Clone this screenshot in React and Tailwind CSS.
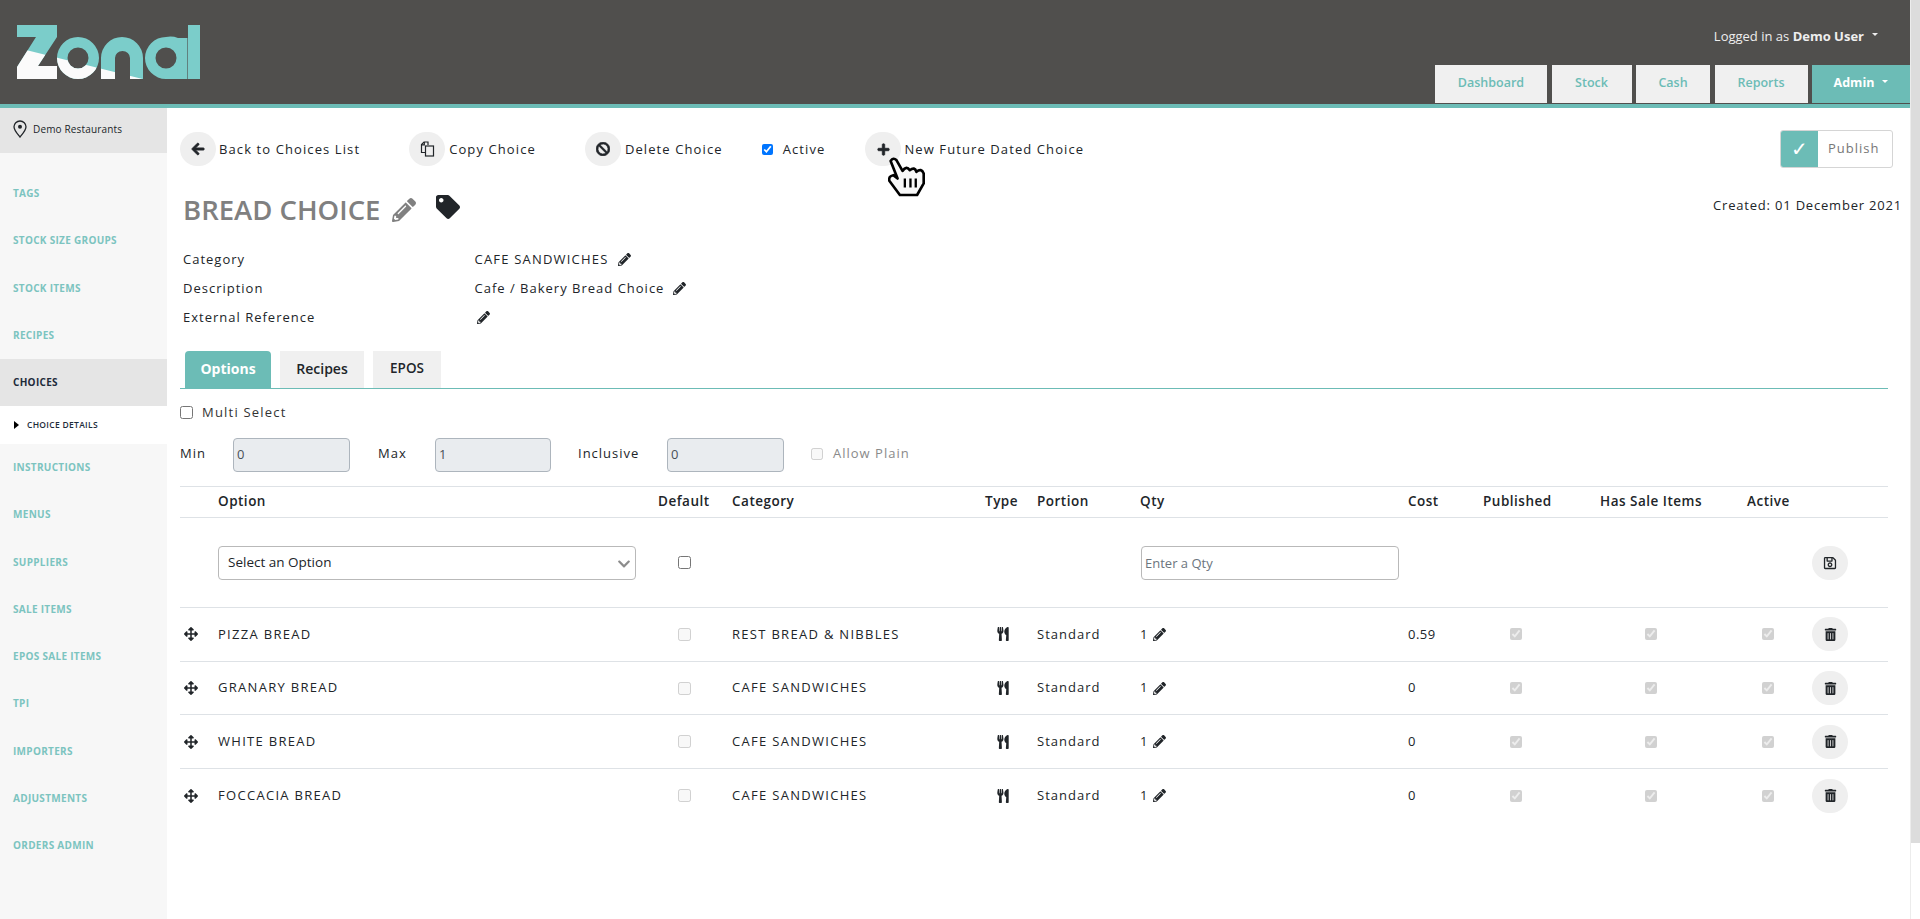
import React from 'react';
import {
  FaArrowLeft,
  FaArrowsAlt,
  FaBan,
  FaChevronDown,
  FaPencilAlt,
  FaPlus,
  FaRegSave,
  FaTag,
  FaTrashAlt,
  FaUtensils,
} from 'react-icons/fa';

const navTop = ['Tags', 'Stock Size Groups', 'Stock Items', 'Recipes'];
const navBottom = ['Instructions', 'Menus', 'Suppliers', 'Sale Items', 'EPOS Sale Items', 'TPI', 'Importers', 'Adjustments', 'Orders Admin'];

const options = [
  { name: 'PIZZA BREAD', category: 'REST BREAD & NIBBLES', cost: '0.59' },
  { name: 'GRANARY BREAD', category: 'CAFE SANDWICHES', cost: '0' },
  { name: 'WHITE BREAD', category: 'CAFE SANDWICHES', cost: '0' },
  { name: 'FOCCACIA BREAD', category: 'CAFE SANDWICHES', cost: '0' },
];

const gridCols = 'grid grid-cols-[38px_440px_74px_253px_52px_103px_268px_75px_117px_147px_65px_76px] items-center';

const Logo = () => (
  <svg width="184" height="55" viewBox="17 25 184 55">
    <defs>
      <clipPath id="logoLower">
        <polygon points="17,47.8 201,93.5 201,81 17,81" />
      </clipPath>
      <g id="logoShape">
        <polygon points="17,25 57,25 57,37 38,66 57,66 57,79 17,79 17,67 36,37 17,37" />
        <path fillRule="evenodd" d="M78 37a21 21 0 1 0 0 42a21 21 0 1 0 0-42zM78 47.5a10.500 10.500 0 1 1 0 21a10.500 10.500 0 1 1 0-21z" />
        <path d="M101 79V58a21 21 0 0 1 42 0v21h-13V58a7.500 7 0 0 0-15 0v21z" />
        <path fillRule="evenodd" d="M166 37a21 21 0 1 0 0 42h21.400V38h-9.400a21 21 0 0 0-12-1zM166 47.500a10.500 10.500 0 1 1 0 21a10.500 10.500 0 1 1 0-21z" />
        <rect x="188" y="25" width="12" height="54" />
      </g>
    </defs>
    <use href="#logoShape" fill="#7bcdca" />
    <use href="#logoShape" fill="#fbfbfb" clipPath="url(#logoLower)" />
  </svg>
);

const PinIcon = () => (
  <svg width="14" height="18" viewBox="0 0 14 18" fill="none">
    <path d="M7 1C3.600 1 1 3.600 1 6.800C1 10.500 5 14.500 7 17C9 14.500 13 10.500 13 6.800C13 3.600 10.400 1 7 1Z" stroke="#212529" strokeWidth="1.300" />
    <circle cx="7" cy="6.800" r="2" fill="#212529" />
  </svg>
);

const CopyIcon = () => (
  <svg width="15" height="16" viewBox="0 0 15 16" fill="none" stroke="#212529" strokeWidth="1.200">
    <path d="M5.500 11.500H1.500V3.500L4 1H8V4" />
    <rect x="5.500" y="5" width="8" height="10" />
    <path d="M1.500 3.800H4.300V1" />
  </svg>
);

// mouse pointer caught in the screenshot, sits over the "New Future Dated Choice" button
const CursorHand = () => (
  <svg className="absolute left-[885px] top-[155px] pointer-events-none" width="43" height="42" viewBox="495 135 130 125">
    <path
      d="M512 152Q520 140 530 150L548 182Q560 165 570 180Q585 168 590 185Q605 172 612 190L612 220L592 255L540 255L508 212Q505 198 520 195L533 205Z"
      fill="#f8f8f8"
      stroke="#000"
      strokeWidth="8"
      strokeLinejoin="round"
    />
    <path d="M555 205V232M572 205V232M588 205V232" stroke="#000" strokeWidth="7" />
  </svg>
);

const Circle = ({ children }) => (
  <span className="flex h-[34px] w-[36px] shrink-0 items-center justify-center rounded-full bg-[#efefef] text-[#212529]">
    {children}
  </span>
);

const Pencil = ({ className = '' }) => <FaPencilAlt className={`inline-block text-[13px] text-[#212529] ${className}`} />;

const ToolLabel = ({ className = '', children }) => (
  <span className={`pt-[2px] text-[13px] tracking-[1.1px] ${className}`}>{children}</span>
);

const Toolbar = () => (
  <div className="flex h-[38px] items-center pr-[17px]">
    <Circle><FaArrowLeft className="text-[14px] [stroke-width:30]" /></Circle>
    <ToolLabel className="ml-[3px]">Back to Choices List</ToolLabel>
    <span className="ml-[49px]"><Circle><CopyIcon /></Circle></span>
    <ToolLabel className="ml-[4px]">Copy Choice</ToolLabel>
    <span className="ml-[49px]"><Circle><FaBan className="text-[14px] [stroke-width:30]" /></Circle></span>
    <ToolLabel className="ml-[4px]">Delete Choice</ToolLabel>
    <input type="checkbox" defaultChecked className="ml-[39px] h-[11px] w-[11px]" />
    <ToolLabel className="ml-[10px]">Active</ToolLabel>
    <span className="ml-[40px]"><Circle><FaPlus className="text-[13px] [stroke-width:30]" /></Circle></span>
    <ToolLabel className="ml-[3px]">New Future Dated Choice</ToolLabel>
    <div className="ml-auto flex h-[38px] w-[113px] overflow-hidden rounded-[3px] border border-[#d5d5d5]">
      <span className="flex w-[37px] items-center justify-center bg-[#6cbcb6] text-[20px] text-white">✓</span>
      <span className="flex flex-1 items-center pl-[10px] text-[13px] tracking-[1px] text-[#777]">Publish</span>
    </div>
  </div>
);

const Details = () => (
  <>
    <div className="mt-[22px] flex h-[40px] items-center pl-[3px] pr-[8px]">
      <h1 className="text-[27.500px] font-semibold leading-[40px] text-[#808080]">BREAD CHOICE</h1>
      <FaPencilAlt className="ml-[12px] text-[24px] text-[#808080]" />
      <FaTag className="mb-[6px] ml-[20px] text-[24px] text-[#212529]" />
      <span className="ml-auto mb-[8px] text-[13px] tracking-[0.8px]">Created: 01 December 2021</span>
    </div>
    <div className="mt-[15px] pl-[3px] text-[13px] tracking-[1px]">
      <div className="flex h-[29px] items-center">
        <span className="w-[291.500px]">Category</span>
        <span className="tracking-[1.2px]">CAFE SANDWICHES</span>
        <Pencil className="ml-[9px]" />
      </div>
      <div className="flex h-[29px] items-center">
        <span className="w-[291.500px]">Description</span>
        <span>Cafe / Bakery Bread Choice</span>
        <Pencil className="ml-[9px]" />
      </div>
      <div className="flex h-[29px] items-center">
        <span className="w-[294px]">External Reference</span>
        <Pencil />
      </div>
    </div>
  </>
);

const Tabs = () => (
  <div className="mt-[19px] mr-[22px] flex h-[38px] gap-[9px] border-b border-[#6cbcb6] pl-[5px]">
    <span className="flex h-[37px] w-[86px] items-center justify-center rounded-t-[4px] bg-[#6cbcb6] pb-[3px] text-[14px] font-bold text-white">Options</span>
    <span className="flex h-[37px] w-[84px] items-center justify-center bg-[#f0f0f0] pb-[3px] text-[14px] font-semibold">Recipes</span>
    <span className="flex h-[37px] w-[68px] items-center justify-center bg-[#f0f0f0] pb-[3px] text-[13.500px] font-semibold">EPOS</span>
  </div>
);

const Limits = () => (
  <>
    <div className="mt-[17px] flex h-[13px] items-center">
      <input type="checkbox" className="h-[13px] w-[13px]" />
      <span className="ml-[9px] text-[13px] tracking-[1.2px] text-[#333]">Multi Select</span>
    </div>
    <div className="mt-[19px] flex h-[34px] items-center text-[13px] tracking-[1px]">
      <span className="w-[53px] pb-[3px]">Min</span>
      <input readOnly disabled value="0" className="h-[34px] w-[117px] rounded-[4px] border border-[#adb5bd] bg-[#e9ecef] pb-[3px] pl-[3px] text-[13px] text-[#495057]" />
      <span className="ml-[28px] w-[57px] pb-[3px]">Max</span>
      <input readOnly disabled value="1" className="h-[34px] w-[116px] rounded-[4px] border border-[#adb5bd] bg-[#e9ecef] pb-[3px] pl-[3px] text-[13px] text-[#495057]" />
      <span className="ml-[27px] w-[89px] pb-[3px]">Inclusive</span>
      <input readOnly disabled value="0" className="h-[34px] w-[117px] rounded-[4px] border border-[#adb5bd] bg-[#e9ecef] pb-[3px] pl-[3px] text-[13px] text-[#495057]" />
      <input type="checkbox" disabled className="mb-[3px] ml-[27px] h-[12px] w-[12px]" />
      <span className="ml-[10px] pb-[3px] text-[#8a8a8a]">Allow Plain</span>
    </div>
  </>
);

const OptionsTable = () => (
  <div className="mt-[14px] mr-[22px] text-[13px]">
    <div className={`${gridCols} h-[32px] border-y border-[#dee2e6] pb-[1px] text-[13.500px] font-semibold tracking-[0.5px]`}>
      <span />
      <span>Option</span>
      <span>Default</span>
      <span>Category</span>
      <span>Type</span>
      <span>Portion</span>
      <span>Qty</span>
      <span>Cost</span>
      <span>Published</span>
      <span>Has Sale Items</span>
      <span>Active</span>
      <span />
    </div>

    <div className={`${gridCols} h-[90px] border-b border-[#dee2e6]`}>
      <span />
      <div className="relative mr-[22px]">
        <select className="h-[34px] w-full appearance-none rounded-[4px] border border-[#b9b9b9] bg-white pl-[9px] text-[13.500px]">
          <option>Select an Option</option>
        </select>
        <FaChevronDown className="absolute right-[5px] top-[11px] text-[14px] text-[#8c8c8c]" />
      </div>
      <div className="pl-[20px]"><input type="checkbox" className="block h-[13px] w-[13px]" /></div>
      <span />
      <span />
      <span />
      <input placeholder="Enter a Qty" className="ml-[1px] h-[34px] w-[258px] rounded-[4px] border border-[#b9b9b9] bg-white pl-[3px] text-[13px] placeholder:text-[#6c757d]" />
      <span />
      <span />
      <span />
      <span />
      <Circle><FaRegSave className="text-[14px]" /></Circle>
    </div>

    {options.map((item, i) => (
      <div key={item.name} className={`${gridCols} h-[53.700px] ${i < options.length - 1 ? 'border-b border-[#dee2e6]' : ''}`}>
        <FaArrowsAlt className="ml-[4px] text-[14px] text-[#212529]" />
        <span className="tracking-[1.3px]">{item.name}</span>
        <div className="pl-[20px]"><input type="checkbox" disabled className="block h-[13px] w-[13px]" /></div>
        <span className="tracking-[1.3px]">{item.category}</span>
        <FaUtensils className="ml-[11px] text-[14px] text-[#212529]" />
        <span className="tracking-[1px]">Standard</span>
        <span className="flex items-center gap-[6px]">1 <Pencil /></span>
        <span className="tracking-[0.5px]">{item.cost}</span>
        <div className="pl-[27px]"><input type="checkbox" disabled checked readOnly className="block h-[12px] w-[12px]" /></div>
        <div className="pl-[45px]"><input type="checkbox" disabled checked readOnly className="block h-[12px] w-[12px]" /></div>
        <div className="pl-[15px]"><input type="checkbox" disabled checked readOnly className="block h-[12px] w-[12px]" /></div>
        <Circle><FaTrashAlt className="text-[13px]" /></Circle>
      </div>
    ))}
  </div>
);

const NavItem = ({ label }) => (
  <div className="flex h-[47.250px] items-center pl-[13px] text-[10px] font-bold uppercase tracking-[0.3px] text-[#7cc4c0]">
    {label}
  </div>
);

const Sidebar = () => (
  <aside className="w-[167px] shrink-0 bg-[#f7f7f7]">
    <div className="flex h-[45px] items-start gap-[6px] bg-[#e5e5e5] pl-[13px] pt-[12px] text-[10px] font-medium tracking-[0.15px] text-[#212529]">
      <PinIcon />
      <span className="mt-[2px]">Demo Restaurants</span>
    </div>
    <div className="pt-[17px]">
      {navTop.map((label) => <NavItem key={label} label={label} />)}
      <div className="flex h-[47.250px] items-center bg-[#e5e5e5] pl-[13px] text-[10px] font-bold tracking-[0.3px] text-[#1d2b3a]">CHOICES</div>
      <div className="flex h-[37.750px] items-center bg-white pl-[14px] text-[8.500px] font-semibold tracking-[0.3px] text-[#1d2b3a]">
        <span className="h-0 w-0 border-y-[4px] border-l-[5px] border-y-transparent border-l-black" />
        <span className="ml-[8px]">CHOICE DETAILS</span>
      </div>
      {navBottom.map((label) => <NavItem key={label} label={label} />)}
    </div>
  </aside>
);

const Header = () => (
  <header className="flex h-[108px] shrink-0 justify-between border-b-4 border-[#6cbcb6] bg-[#504f4d]">
    <div className="pl-[17px] pt-[25px]">
      <Logo />
    </div>
    <div className="flex flex-col items-end">
      <div className="mr-[32px] mt-[27px] flex items-center text-[13px] text-[#eee]">
        Logged in as&nbsp;<span className="font-bold">Demo User</span>
        <span className="mb-[4px] ml-[8px] h-0 w-0 border-x-[3px] border-t-[3px] border-x-transparent border-t-[#eee]" />
      </div>
      <nav className="mt-auto mb-px flex h-[38px] gap-[4.500px] text-[12.500px] font-semibold text-[#6cbcb6]">
        <span className="flex w-[112px] items-center justify-center bg-[#f0f0f0] pb-[2px]">Dashboard</span>
        <span className="flex w-[80px] items-center justify-center bg-[#f0f0f0] pb-[2px]">Stock</span>
        <span className="flex w-[74px] items-center justify-center bg-[#f0f0f0] pb-[2px]">Cash</span>
        <span className="flex w-[93px] items-center justify-center bg-[#f0f0f0] pb-[2px]">Reports</span>
        <span className="flex w-[98px] items-center justify-center gap-[8px] bg-[#6cbcb6] pb-[2px] font-bold text-white">
          Admin
          <span className="mb-[4px] h-0 w-0 border-x-[3px] border-t-[3px] border-x-transparent border-t-white" />
        </span>
      </nav>
    </div>
  </header>
);

const Scrollbar = () => (
  <div className="flex w-[10px] shrink-0 flex-col border-l border-[#ececec]">
    <div className="h-[843px] bg-[#dcdcdc]" />
  </div>
);

export default function App() {
  return (
    <div className="relative flex h-[919px] overflow-hidden bg-white font-['Open_Sans',sans-serif] text-[#212529]">
      <div className="flex min-w-0 flex-1 flex-col">
        <Header />
        <div className="flex flex-1">
          <Sidebar />
          <main className="min-w-0 flex-1 pl-[13px] pt-[22px]">
            <Toolbar />
            <Details />
            <Tabs />
            <Limits />
            <OptionsTable />
          </main>
        </div>
      </div>
      <Scrollbar />
      <CursorHand />
    </div>
  );
}
